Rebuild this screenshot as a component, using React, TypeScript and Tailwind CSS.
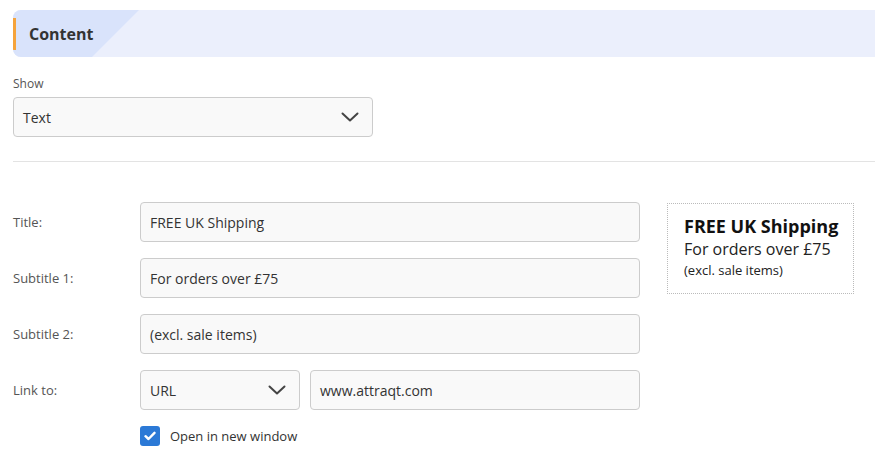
import { useState } from 'react'

function Chevron() {
  return (
    <svg width="18" height="10" viewBox="0 0 18 10" fill="none" className="shrink-0">
      <polyline points="1.5,1.5 9,8.5 16.5,1.5" stroke="#444" strokeWidth="2" strokeLinecap="round" strokeLinejoin="round" />
    </svg>
  )
}

function SelectBox({ value, className }: { value: string; className: string }) {
  return (
    <div
      className={`h-[40px] flex items-center justify-between pl-[9px] pr-[13px] border border-[#cccccc] rounded-[4px] bg-[#f9f9f9] text-[14px] text-[#333] ${className}`}
    >
      <span>{value}</span>
      <Chevron />
    </div>
  )
}

function TextBox({ value, className }: { value: string; className: string }) {
  return (
    <div
      className={`h-[40px] flex items-center px-[9px] border border-[#cccccc] rounded-[4px] bg-[#f9f9f9] text-[14px] text-[#333] ${className}`}
    >
      {value}
    </div>
  )
}

function Row({ label, children }: { label: string; children: React.ReactNode }) {
  return (
    <div className="flex items-center">
      <div className="w-[127px] shrink-0 pt-[2px] text-[13px] text-[#555]">{label}</div>
      {children}
    </div>
  )
}

export default function App() {
  const [newWindow, setNewWindow] = useState(true)
  const title = 'FREE UK Shipping'
  const sub1 = 'For orders over £75'
  const sub2 = '(excl. sale items)'

  return (
    <div className="w-[875px] h-[468px] bg-white pl-[13px] pt-[10px] overflow-hidden" style={{ fontFamily: '"Open Sans", sans-serif' }}>
      {/* section header */}
      <div className="relative h-[47px] bg-[#ebeffc] rounded-l-[8px] overflow-hidden flex items-center">
        <svg className="absolute left-0 top-0" width="126" height="47" viewBox="0 0 126 47">
          <polygon points="0,0 126,0 79,47 0,47" fill="#d9e3fb" />
        </svg>
        <div className="absolute left-0 top-[8px] w-[3px] h-[32px] bg-[#f5a33c]" />
        <span className="relative pl-[16px] text-[16px] font-bold text-[#333]">Content</span>
      </div>

      <div className="mt-[19px] text-[12px] leading-[16px] text-[#555]">Show</div>
      <SelectBox value="Text" className="mt-[5px] w-[360px]" />

      <div className="mt-[24px] h-px bg-[#e3e3e3]" />

      <div className="mt-[40px] flex">
        <div className="flex flex-col gap-[16px]">
          <Row label="Title:">
            <TextBox value={title} className="w-[500px]" />
          </Row>
          <Row label="Subtitle 1:">
            <TextBox value={sub1} className="w-[500px]" />
          </Row>
          <Row label="Subtitle 2:">
            <TextBox value={sub2} className="w-[500px]" />
          </Row>
          <Row label="Link to:">
            <SelectBox value="URL" className="w-[160px]" />
            <TextBox value="www.attraqt.com" className="ml-[10px] w-[330px]" />
          </Row>
          <div className="flex items-center pl-[127px]">
            <button
              onClick={() => setNewWindow(!newWindow)}
              className={`w-[20px] h-[20px] rounded-[3px] flex items-center justify-center ${newWindow ? 'bg-[#2b79d6]' : 'bg-white border border-[#aaa]'}`}
            >
              {newWindow && (
                <svg width="12" height="10" viewBox="0 0 12 10" fill="none">
                  <polyline points="1.5,5.2 4.5,8 10.5,1.8" stroke="white" strokeWidth="2.4" strokeLinecap="round" strokeLinejoin="round" />
                </svg>
              )}
            </button>
            <span className="ml-[10px] pt-[1px] text-[13px] text-[#333]">Open in new window</span>
          </div>
        </div>

        {/* preview */}
        <div className="ml-[27px] mt-px w-[187px] h-[91px] border border-dotted border-[#bbb] pl-[16px] pt-[10px]">
          <div className="text-[18px] leading-[24px] font-bold text-[#111]">{title}</div>
          <div className="text-[16px] leading-[22px] text-[#222]">{sub1}</div>
          <div className="text-[13px] leading-[20px] text-[#222]">{sub2}</div>
        </div>
      </div>
    </div>
  )
}
